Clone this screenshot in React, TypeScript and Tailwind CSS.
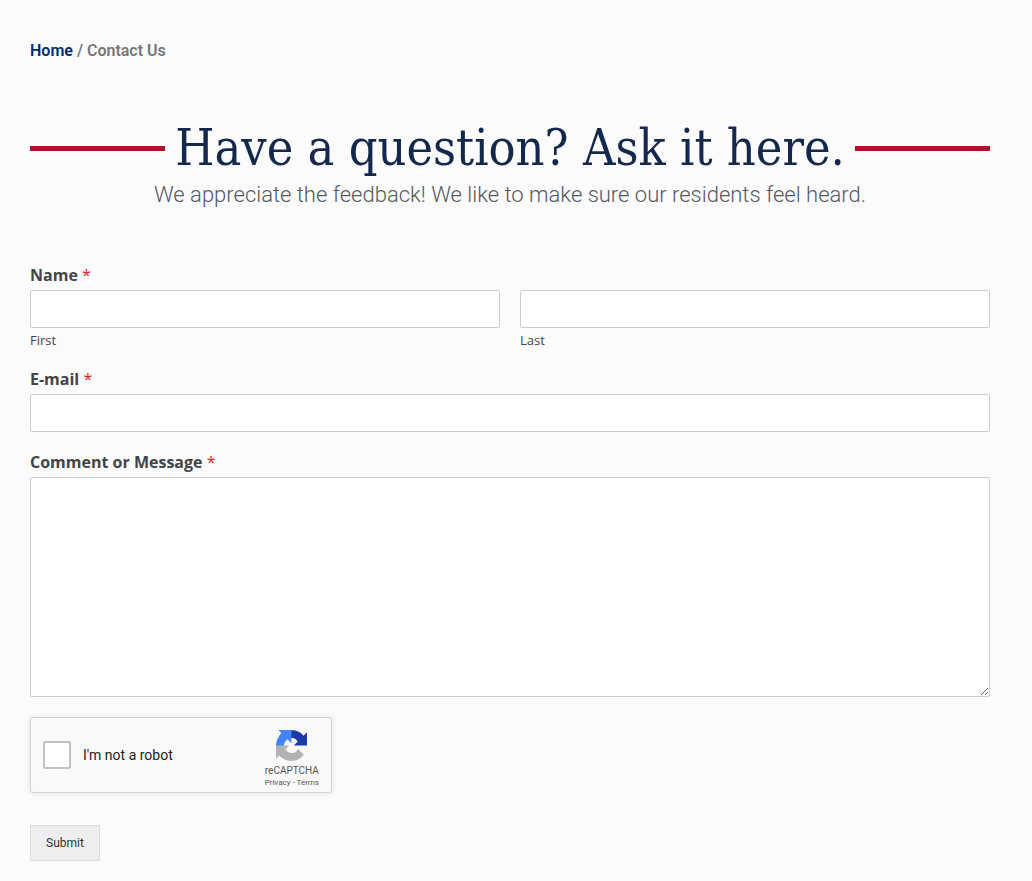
import React from "react";

const fieldClass =
  "block w-full rounded-xs border border-[#cccccc] bg-white px-2.5 text-base text-[#333333] outline-none focus:border-[#999999]";
const labelClass = "block text-base leading-5 font-bold text-[#444444]";

function Required() {
  return <span className="font-normal text-[#e8202a]">*</span>;
}

function RecaptchaLogo() {
  return (
    <svg viewBox="0 0 64 64" className="size-[31px]" aria-hidden="true">
      <path
        fill="#1c3aa9"
        d="M64 31.955l-.033-1.37V4.687l-7.16 7.16C50.948 4.674 42.033.093 32.05.093c-10.4 0-19.622 4.96-25.458 12.64l11.736 11.86a15.55 15.55 0 0 1 4.754-5.334c2.05-1.6 4.952-2.906 8.968-2.906.485 0 .86.057 1.135.163 4.976.393 9.288 3.14 11.828 7.124l-8.307 8.307L64 31.953"
      />
      <path
        fill="#4285f4"
        d="M31.862.094l-1.37.033H4.594l7.16 7.16C4.58 13.147 0 22.06 0 32.046c0 10.4 4.96 19.622 12.64 25.458L24.5 45.768a15.55 15.55 0 0 1-5.334-4.754c-1.6-2.05-2.906-4.952-2.906-8.968 0-.485.057-.86.163-1.135.393-4.976 3.14-9.288 7.124-11.828l8.307 8.307L31.86.095"
      />
      <path
        fill="#b2b2b2"
        d="M.001 32.045l.033 1.37v25.898l7.16-7.16c5.86 7.173 14.774 11.754 24.76 11.754 10.4 0 19.622-4.96 25.458-12.64l-11.736-11.86a15.55 15.55 0 0 1-4.754 5.334c-2.05 1.6-4.952 2.906-8.968 2.906-.485 0-.86-.057-1.135-.163-4.976-.393-9.288-3.14-11.828-7.124l8.307-8.307c-10.522.04-22.4.066-27.295-.005"
      />
    </svg>
  );
}

function Recaptcha() {
  return (
    <div className="mt-5 flex h-19 w-full max-w-[302px] items-center rounded-[3px] border border-[#d3d3d3] bg-[#f9f9f9] px-3 font-['Roboto',sans-serif] shadow-[0_0_4px_1px_rgba(0,0,0,0.08)]">
      <input
        id="robot"
        type="checkbox"
        className="size-7 appearance-none rounded-xs border-2 border-[#c1c1c1] bg-white checked:bg-[#4285f4]"
      />
      <label htmlFor="robot" className="ml-3 grow text-sm text-[#222222]">
        I'm not a robot
      </label>
      <div className="flex flex-col items-center pt-2 text-[#555555]">
        <RecaptchaLogo />
        <div className="mt-1 text-[10px] leading-3">reCAPTCHA</div>
        <div className="text-[8px] leading-3">
          <a href="#privacy">Privacy</a> - <a href="#terms">Terms</a>
        </div>
      </div>
    </div>
  );
}

export default function App() {
  return (
    <main className="min-h-screen bg-[#fbfbfb] pt-[41px] pr-[42px] pb-5 pl-[30px] font-['Open_Sans',sans-serif]">
      <nav aria-label="Breadcrumb" className="font-['Roboto',sans-serif] text-base leading-5 font-semibold text-[#777777]">
        <a href="#home" className="text-[#002d6d]">
          Home
        </a>{" "}
        / <span>Contact Us</span>
      </nav>

      <header className="mt-[55px] text-center">
        <div className="flex items-center gap-2.5">
          <span className="h-[5px] grow bg-[#af1329]" />
          <h1 className="font-['DejaVu_Serif_Condensed','DejaVu_Serif',serif] text-[50px] leading-16 font-light text-[#13284c]">
            Have a question? Ask it here.
          </h1>
          <span className="h-[5px] grow bg-[#af1329]" />
        </div>
        <p className="font-['Roboto',sans-serif] text-[22px] leading-[30px] font-light text-[#54595f]">
          We appreciate the feedback! We like to make sure our residents feel heard.
        </p>
      </header>

      <form className="mt-[55px]" onSubmit={(event) => event.preventDefault()}>
        <fieldset>
          <legend className={labelClass}>
            Name <Required />
          </legend>
          <div className="mt-[5px] grid grid-cols-2 gap-5">
            <div>
              <input id="first" type="text" required className={`${fieldClass} h-[38px]`} />
              <label htmlFor="first" className="mt-1 block text-[13px] leading-[17px] text-[#444444]">
                First
              </label>
            </div>
            <div>
              <input id="last" type="text" required className={`${fieldClass} h-[38px]`} />
              <label htmlFor="last" className="mt-1 block text-[13px] leading-[17px] text-[#444444]">
                Last
              </label>
            </div>
          </div>
        </fieldset>

        <div className="mt-5">
          <label htmlFor="email" className={labelClass}>
            E-mail <Required />
          </label>
          <input id="email" type="email" required className={`${fieldClass} mt-[5px] h-[38px]`} />
        </div>

        <div className="mt-5">
          <label htmlFor="message" className={labelClass}>
            Comment or Message <Required />
          </label>
          <textarea id="message" required className={`${fieldClass} mt-[5px] h-[220px] resize-y py-2`} />
        </div>

        <Recaptcha />

        <button
          type="submit"
          className="mt-8 h-9 border border-[#dddddd] bg-[#eeeeee] px-[15px] font-['Roboto',sans-serif] text-xs text-[#333333]"
        >
          Submit
        </button>
      </form>
    </main>
  );
}
